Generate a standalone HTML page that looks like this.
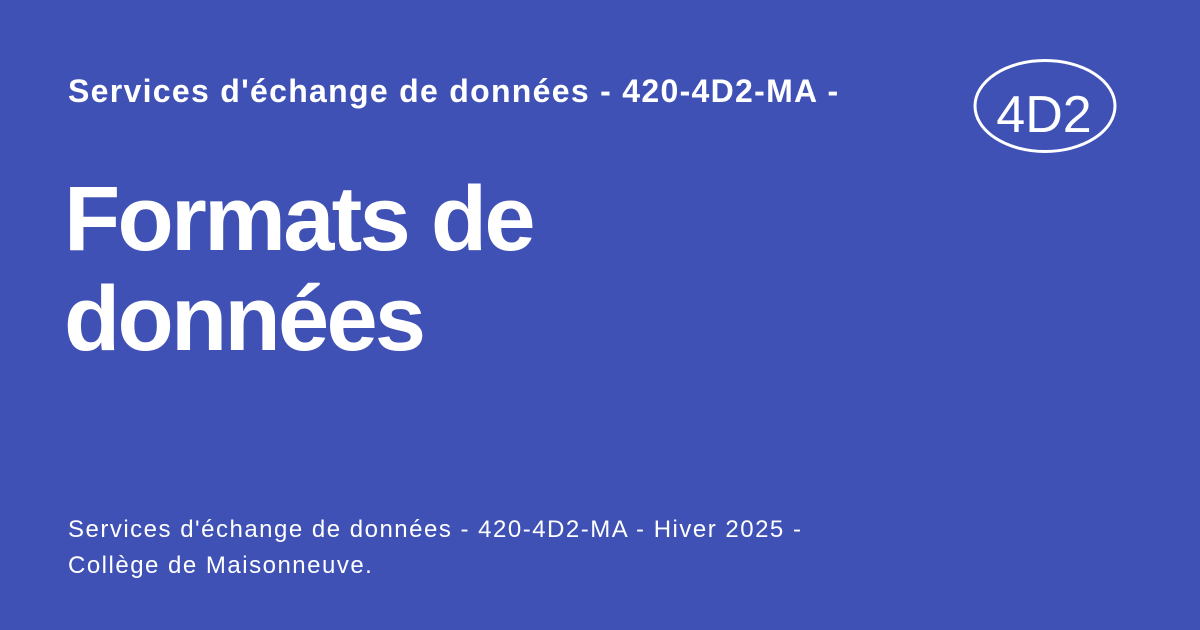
<!DOCTYPE html>
<html><head><meta charset="utf-8"><style>
html,body{margin:0;padding:0}
body{width:1200px;height:630px;background:#3f51b5;position:relative;overflow:hidden;font-family:"Liberation Sans",Arial,sans-serif;color:#fff}
.t{position:absolute;left:68px;white-space:nowrap}
</style></head><body>
<div class="t" style="top:71px;font-size:32px;font-weight:bold;line-height:40px;letter-spacing:1.3px">Services d'échange de données - 420-4D2-MA -</div>
<div class="t" style="left:64px;top:169px;font-size:92px;font-weight:bold;line-height:100px;letter-spacing:-2.7px">Formats de<br>données</div>
<div class="t" style="top:512px;font-size:24px;line-height:36px;letter-spacing:1.5px">Services d'échange de données - 420-4D2-MA - Hiver 2025 -<br>Collège de Maisonneuve.</div>
<svg style="position:absolute;left:0;top:0" width="1200" height="630">
<ellipse cx="1045" cy="106" rx="70" ry="45.5" fill="none" stroke="#fff" stroke-width="3"/>
<text x="1044" y="132" text-anchor="middle" font-family="Liberation Sans,Arial,sans-serif" font-size="52" fill="#fff">4D2</text>
</svg>
</body></html>
